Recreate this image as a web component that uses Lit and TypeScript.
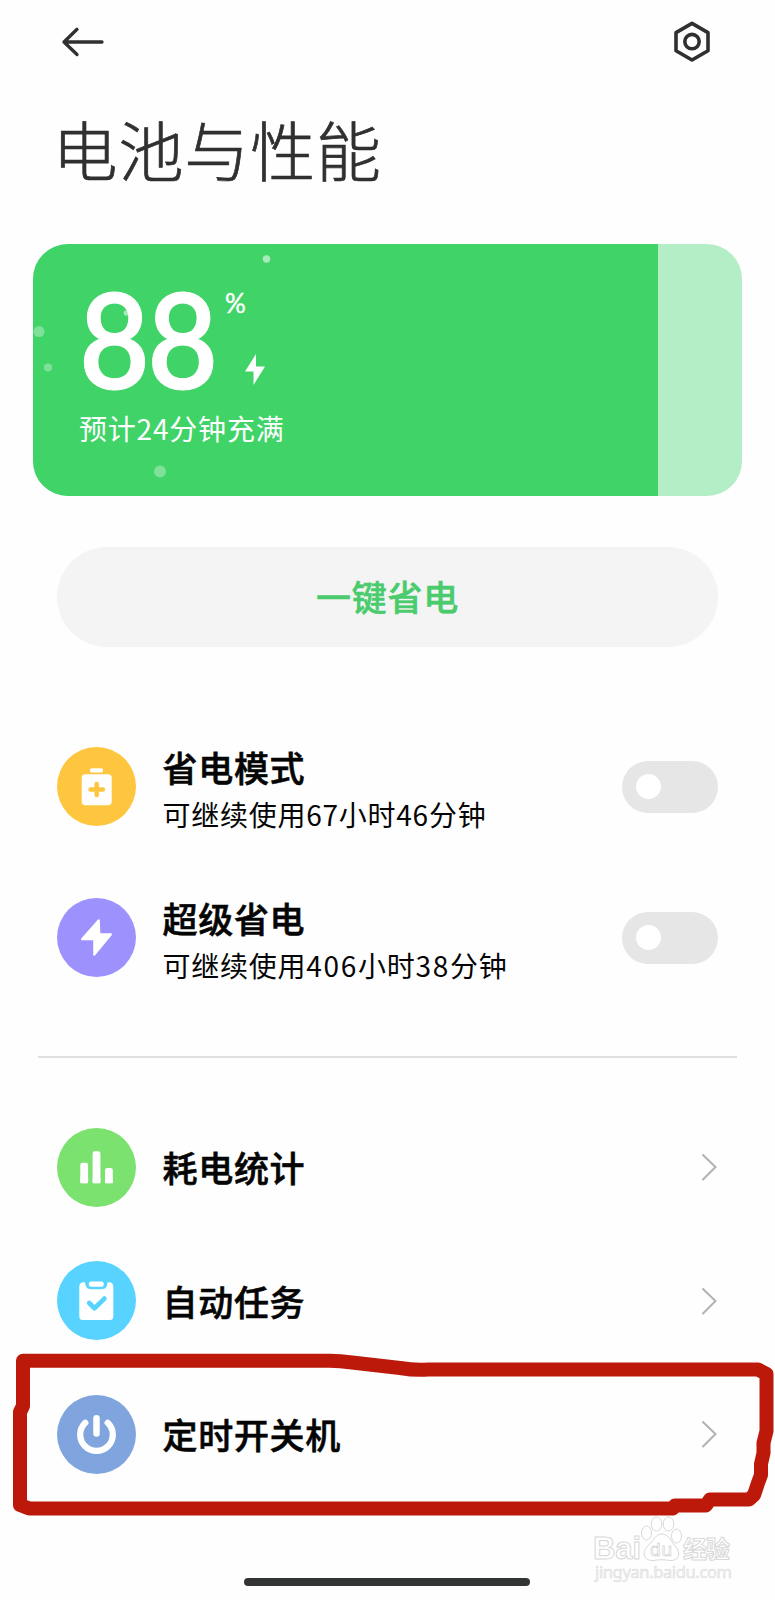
import { LitElement, html, css, svg } from "lit";
import { customElement, property } from "lit/decorators.js";

const glyphs: Record<string, unknown> = {
  saver: svg`<rect x="33" y="21.2" width="13" height="4.4" rx="1.6" fill="#fff"/><rect x="24.7" y="27.2" width="30" height="31" rx="3.6" fill="#fff"/><path d="M39.7 37.100v10.800M33.500 42.500h12.400" stroke="#fec63f" stroke-width="4.500" stroke-linecap="round"/>`,
  bolt: svg`<path d="M41.800 22.200L25 41.200H37.200V56.800L54 36.300H42.400Z" fill="#fff" stroke="#fff" stroke-width="2" stroke-linejoin="round"/>`,
  stats: svg`<rect x="23.300" y="34.800" width="7.800" height="20.500" rx="2.200" fill="#fff"/><rect x="35.600" y="23.200" width="7.800" height="32.100" rx="2.200" fill="#fff"/><rect x="48" y="40" width="7.800" height="15.300" rx="2.200" fill="#fff"/><path d="M23.300 50h7.800v5.300h-7.800zM35.600 50h7.800v5.300h-7.800zM48 50h7.800v5.300h-7.800z" fill="#fff"/>`,
  task: svg`<path d="M25.800 21.200h2.200q.3 7 6 7h10.600q5.700 0 6-7h2.200q3.500.8 3.500 4.500v29.800q0 3.500-3.500 3.500h-27q-3.500 0-3.500-3.500v-29.800q0-3.700 3.500-4.500z" fill="#fff"/><rect x="31.800" y="20.500" width="15" height="5.300" rx="2.400" fill="#fff"/><path d="M32.200 42l5.300 5.200 9.900-9.600" fill="none" stroke="#58d3ff" stroke-width="4.700" stroke-linecap="round" stroke-linejoin="round"/>`,
  power: svg`<path d="M28.300 27.800a16.300 16.300 0 1 0 22.400 0" fill="none" stroke="#fff" stroke-width="6.300" stroke-linecap="round"/><path d="M39.500 23.300v15.200" stroke="#fff" stroke-width="6.500" stroke-linecap="round"/>`,
};

@customElement("row-icon")
class RowIcon extends LitElement {
  @property() name = "saver";
  static styles = css`
    :host { display: block; width: 79px; height: 79px; flex: none; }
    svg { display: block; }
    .saver { fill: #fec63f; } .bolt { fill: #9d92fd; } .stats { fill: #7be16f; }
    .task { fill: #58d3ff; } .power { fill: #80a5de; }
  `;
  render() {
    return html`<svg width="79" height="79" viewBox="0 0 79 79">
      <circle class=${this.name} cx="39.5" cy="39.5" r="39.5"/>${glyphs[this.name]}
    </svg>`;
  }
}

@customElement("app-root")
class AppRoot extends LitElement {
  static styles = css`
    :host {
      display: block; position: relative; width: 775px; height: 1600px; overflow: hidden;
      box-sizing: border-box; background: #fefefe; color: #050505;
      font-family: "Noto Sans CJK SC", sans-serif;
    }
    svg { display: block; }
    .top { display: flex; justify-content: space-between; padding: 20px 64px 0 61px; height: 64px; box-sizing: border-box; }
    h1 { margin: 0; padding: 44px 0 0 52.500px; height: 180px; box-sizing: border-box; font-size: 65px; line-height: 80px; font-weight: 300; letter-spacing: .9px; color: #303030; -webkit-text-stroke: .7px #303030; }
    .card { position: relative; margin-left: 32.500px; width: 709.5px; height: 252px; border-radius: 35px; background: #b3eec6; overflow: hidden; }
    .level { height: 100%; background: #40d367; box-sizing: border-box; padding: 29.500px 0 0 46.500px; color: #fff; }
    .figure { display: flex; height: 134px; font-family: Lato, sans-serif; }
    .num { font-size: 133px; line-height: 127px; height: 127px; font-weight: 600; letter-spacing: -3px; width: 140px; transform: scaleX(.92); transform-origin: 0 50%; -webkit-text-stroke: 1px #fff; }
    .pct { font-size: 26px; line-height: 30px; width: 21px; margin: 14.500px 0 0 6px; -webkit-text-stroke: .4px #fff; }
    .charge { margin: 80px 0 0 -2.500px; }
    .eta { font-size: 28px; line-height: 40px; letter-spacing: .8px; }
    .bubbles { position: absolute; left: 0; top: 0; }
    .save { display: flex; align-items: center; justify-content: center; margin: 50.500px 0 0 57px; width: 661px; height: 100px; border-radius: 50px; background: #f4f4f4; color: #4acb6e; font-size: 35px; font-weight: 500; letter-spacing: .8px; -webkit-text-stroke: .5px #4acb6e; box-sizing: border-box; padding-bottom: 2px; }
    .list { padding: 0 57px; }
    .row { display: flex; align-items: center; height: 79px; }
    .modes { padding-top: 100.500px; display: grid; gap: 72px; }
    .links { padding-top: 70px; display: grid; gap: 54.600px; }
    .copy { flex: 1; padding-left: 26.500px; }
    .name { font-size: 35px; line-height: 44px; font-weight: 500; letter-spacing: .7px; -webkit-text-stroke: .6px #050505; }
    .note { font-size: 28px; line-height: 40px; letter-spacing: .75px; margin-top: 5px; }
    .wide { letter-spacing: 1.700px; }
    .modes .copy { padding-top: 6px; }
    .switch { width: 95.500px; height: 52px; border-radius: 26px; background: #e6e6e6; box-sizing: border-box; padding: 13.500px; margin-right: .3px; }
    .knob { width: 25px; height: 25px; border-radius: 50%; background: #fff; }
    hr { margin: 79px 38px 0; height: 1.500px; border: 0; background: #e0e0e0; }
    .home { width: 286px; height: 7.500px; border-radius: 4px; background: #333535; margin: 104.500px 0 0 244px; }
    .overlay { position: absolute; left: 0; top: 1340px; pointer-events: none; }
    .wm { font-family: "Liberation Sans", "Noto Sans CJK SC", sans-serif; fill: #fff; stroke: #d8d8d8; stroke-width: 1px; font-weight: 700; }
    .du { font-weight: 400; stroke-width: .8px; }
    .url { font-family: "Noto Sans", sans-serif; font-weight: 400; fill: #efefef; stroke: #dcdcdc; stroke-width: .5px; }
  `;

  mode(icon: string, name: string, note: unknown) {
    return html`<div class="row"><row-icon name=${icon}></row-icon>
      <div class="copy"><div class="name">${name}</div><div class="note">${note}</div></div>
      <div class="switch"><div class="knob"></div></div></div>`;
  }

  link(icon: string, name: string) {
    return html`<div class="row"><row-icon name=${icon}></row-icon>
      <div class="copy"><div class="name">${name}</div></div>
      <svg width="18" height="30" viewBox="0 0 18 30"><path d="M3 3 L15.500 15 L3 27.500" fill="none" stroke="#b2b2b2" stroke-width="2" stroke-linecap="round"/></svg></div>`;
  }

  render() {
    return html`
      <div class="top">
        <svg width="44" height="44" viewBox="0 0 44 44" fill="none" stroke="#303030" stroke-width="3.300" stroke-linecap="round" stroke-linejoin="round"><path d="M3 22H41M16 9.300L3 22L16 34.500"/></svg>
        <svg width="39" height="44" viewBox="0 0 39 44" fill="none" stroke="#303030" stroke-width="3.600" stroke-linejoin="round"><path d="M20 3.400L36 12.600V30.800L20 40L4 30.800V12.600Z"/><circle cx="20" cy="21.600" r="7.200"/></svg>
      </div>
      <h1>电池与性能</h1>
      <div class="card">
        <div class="level" style="width:${88 * 0.8804 + 10.65}%">
          <div class="figure"><span class="num">88</span><span class="pct">%</span>
            <svg class="charge" width="22" height="32" viewBox="0 0 22 32"><path d="M12 0L1 17.500H9.500V31L21 12.500H12Z" fill="#fff"/></svg></div>
          <div class="eta">预计24分钟充满</div>
        </div>
        <svg class="bubbles" width="300" height="252" fill="#fff"><g fill-opacity=".32"><circle cx="233.500" cy="15" r="3.700" fill-opacity=".55"/><circle cx="6" cy="87.500" r="5.500"/><circle cx="15" cy="123.500" r="4"/><circle cx="127" cy="227.500" r="6"/><circle cx="93.500" cy="69" r="2.800" fill-opacity=".55"/></g></svg>
      </div>
      <div class="save">一键省电</div>
      <div class="list modes">
        ${this.mode("saver", "省电模式", "可继续使用67小时46分钟")}
        ${this.mode("bolt", "超级省电", html`可继续使用<span class="wide">406</span>小时<span class="wide">38</span>分钟`)}
      </div>
      <hr />
      <div class="list links">
        ${this.link("stats", "耗电统计")}
        ${this.link("task", "自动任务")}
        ${this.link("power", "定时开关机")}
      </div>
      <div class="home"></div>
      <svg class="overlay" width="775" height="260" viewBox="0 1340 775 260">
        <path d="M23 1360.700H330Q340 1361 352 1362.500L400 1368Q415 1370.500 428 1369.500H758L766.500 1374V1431L763.500 1443V1453L761 1464V1475L758 1483L754 1495L749 1499.500H710L706 1505.400H675L673 1508.400H29L20 1505V1412L23 1406Z" fill="none" stroke="#bc190b" stroke-width="14" stroke-linejoin="round"/>
        <g class="wm">
          <text x="593" y="1559" font-size="31" textLength="48">Bai</text>
          <ellipse cx="646.500" cy="1533" rx="5" ry="7"/><ellipse cx="656.500" cy="1524" rx="5.300" ry="7"/><ellipse cx="668.500" cy="1524" rx="5.300" ry="7"/><ellipse cx="676.500" cy="1536" rx="5" ry="7"/>
          <path d="M662 1534C655 1534 653 1542 647 1547C641 1553 645 1561 653 1560.500C659 1559.500 665 1559.500 670 1560.500C679 1561 681 1553 676 1547C671 1542 669 1534 662 1534Z"/>
          <text class="du" x="650" y="1556" font-size="19" textLength="22">du</text>
          <text x="683" y="1558" font-size="24" textLength="47">经验</text>
          <text class="url" x="595" y="1578" font-size="16.500" textLength="137">jingyan.baidu.com</text>
        </g>
      </svg>
    `;
  }
}
